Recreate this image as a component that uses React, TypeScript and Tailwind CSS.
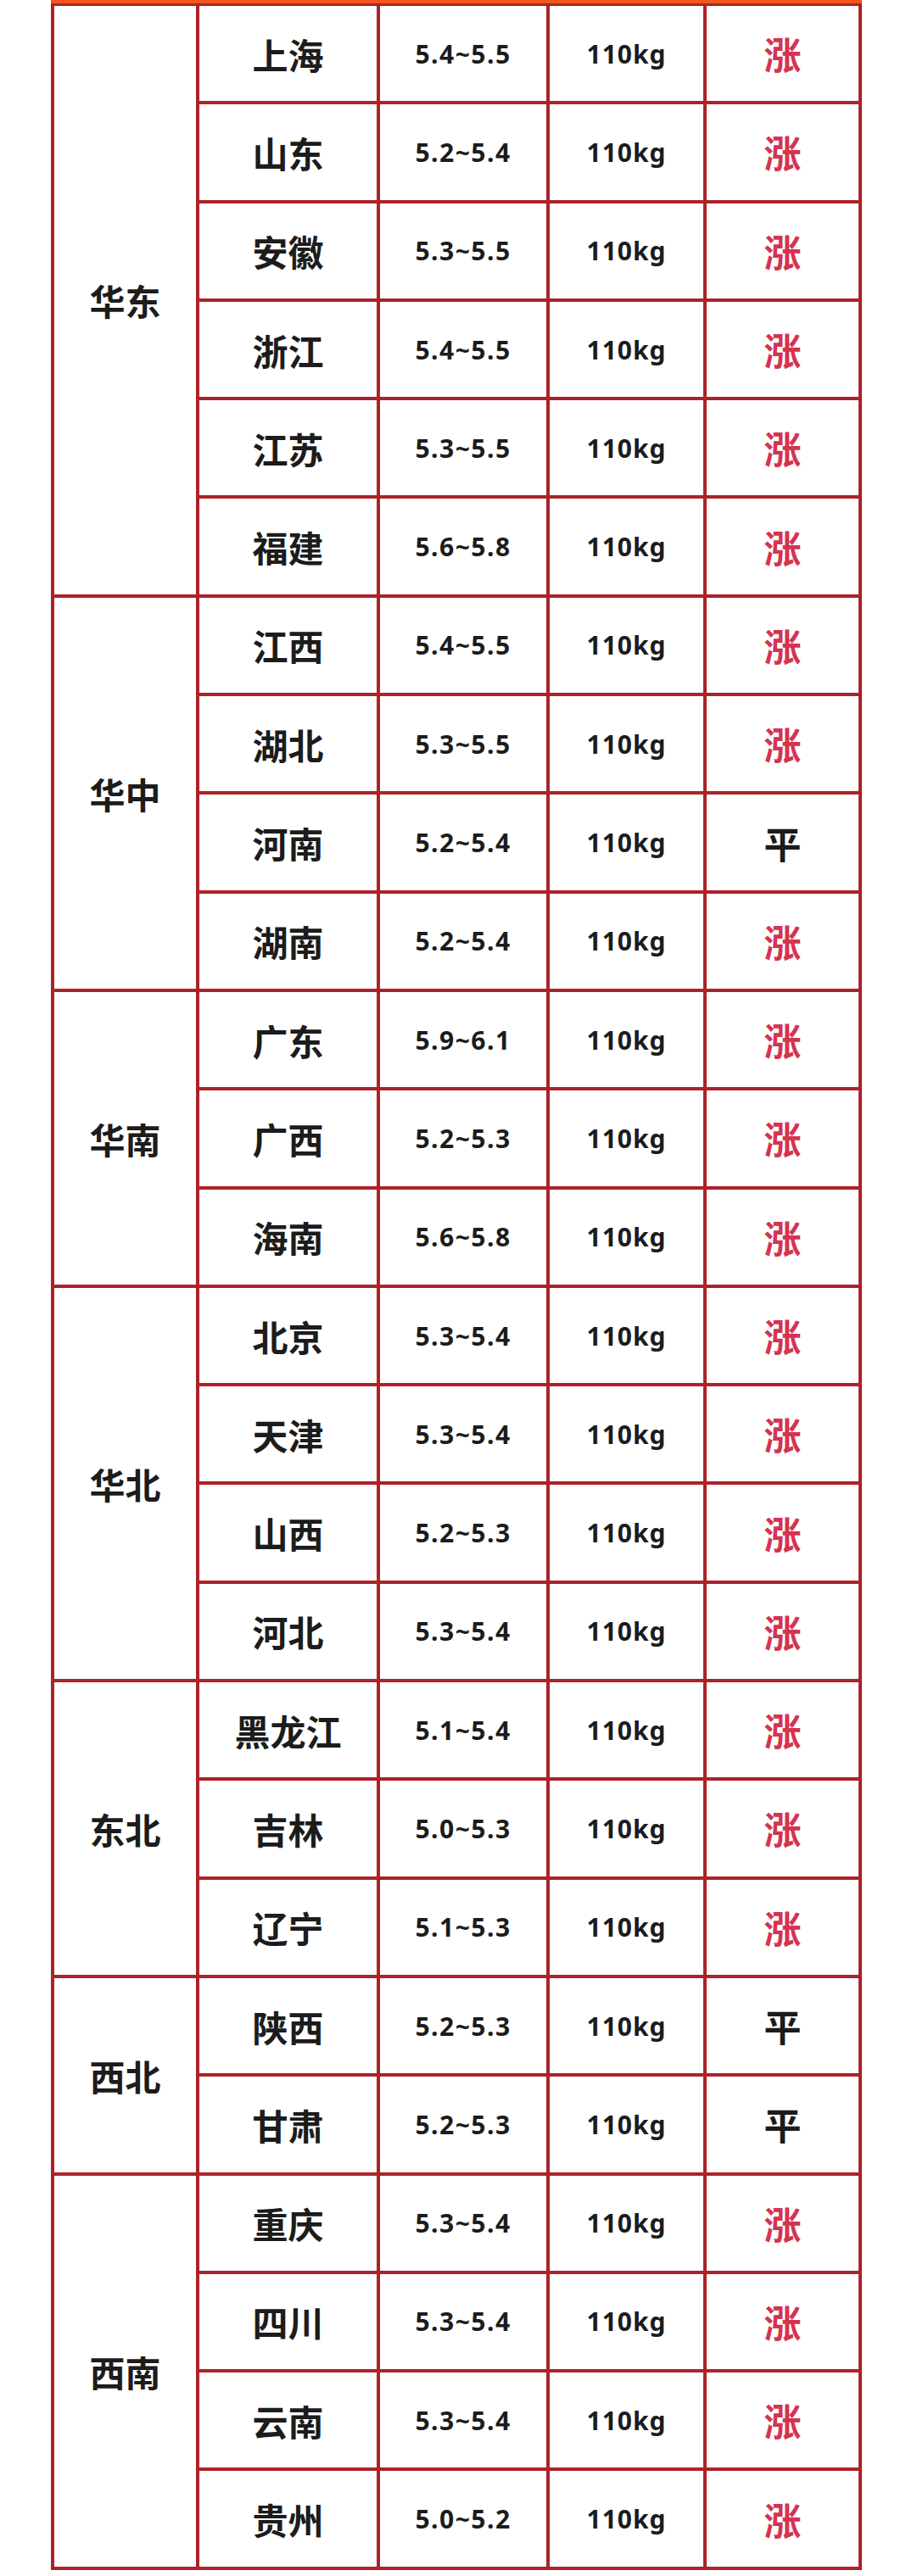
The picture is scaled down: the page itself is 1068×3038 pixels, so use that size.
const regions = [
  {
    name: "华东",
    rows: [
      { province: "上海", price: "5.4~5.5", weight: "110kg", trend: "涨" },
      { province: "山东", price: "5.2~5.4", weight: "110kg", trend: "涨" },
      { province: "安徽", price: "5.3~5.5", weight: "110kg", trend: "涨" },
      { province: "浙江", price: "5.4~5.5", weight: "110kg", trend: "涨" },
      { province: "江苏", price: "5.3~5.5", weight: "110kg", trend: "涨" },
      { province: "福建", price: "5.6~5.8", weight: "110kg", trend: "涨" },
    ],
  },
  {
    name: "华中",
    rows: [
      { province: "江西", price: "5.4~5.5", weight: "110kg", trend: "涨" },
      { province: "湖北", price: "5.3~5.5", weight: "110kg", trend: "涨" },
      { province: "河南", price: "5.2~5.4", weight: "110kg", trend: "平" },
      { province: "湖南", price: "5.2~5.4", weight: "110kg", trend: "涨" },
    ],
  },
  {
    name: "华南",
    rows: [
      { province: "广东", price: "5.9~6.1", weight: "110kg", trend: "涨" },
      { province: "广西", price: "5.2~5.3", weight: "110kg", trend: "涨" },
      { province: "海南", price: "5.6~5.8", weight: "110kg", trend: "涨" },
    ],
  },
  {
    name: "华北",
    rows: [
      { province: "北京", price: "5.3~5.4", weight: "110kg", trend: "涨" },
      { province: "天津", price: "5.3~5.4", weight: "110kg", trend: "涨" },
      { province: "山西", price: "5.2~5.3", weight: "110kg", trend: "涨" },
      { province: "河北", price: "5.3~5.4", weight: "110kg", trend: "涨" },
    ],
  },
  {
    name: "东北",
    rows: [
      { province: "黑龙江", price: "5.1~5.4", weight: "110kg", trend: "涨" },
      { province: "吉林", price: "5.0~5.3", weight: "110kg", trend: "涨" },
      { province: "辽宁", price: "5.1~5.3", weight: "110kg", trend: "涨" },
    ],
  },
  {
    name: "西北",
    rows: [
      { province: "陕西", price: "5.2~5.3", weight: "110kg", trend: "平" },
      { province: "甘肃", price: "5.2~5.3", weight: "110kg", trend: "平" },
    ],
  },
  {
    name: "西南",
    rows: [
      { province: "重庆", price: "5.3~5.4", weight: "110kg", trend: "涨" },
      { province: "四川", price: "5.3~5.4", weight: "110kg", trend: "涨" },
      { province: "云南", price: "5.3~5.4", weight: "110kg", trend: "涨" },
      { province: "贵州", price: "5.0~5.2", weight: "110kg", trend: "涨" },
    ],
  },
];

const cjk = "font-['Noto_Sans_CJK_SC',sans-serif]";
const num = "font-['Noto_Sans','Noto_Sans_CJK_SC',sans-serif]";

export default function App() {
  return (
    <div className="min-h-screen bg-white pl-[60px]">
      <div className="w-[956px]">
        {/* top edge of the table */}
        <div className="h-[4px] bg-[#f2571c]" />
        <div className="flex flex-col gap-[4px] bg-[#ad2229] px-[4px] pt-[3px] pb-[4px]">
          {regions.map((region) => (
            <div key={region.name} className="flex gap-[4px]">
              <div
                className={`w-[167px] shrink-0 bg-white flex items-center justify-center text-[42px] font-bold text-[#1c1c1c] ${cjk}`}
              >
                {region.name}
              </div>
              <div className="flex flex-1 flex-col gap-[4px]">
                {region.rows.map((row) => (
                  <div
                    key={row.province}
                    className="grid h-[112.3px] grid-cols-[209px_196px_181px_179px] gap-[4px]"
                  >
                    <div
                      className={`bg-white flex items-center justify-center text-[42px] font-bold text-[#1c1c1c] ${cjk}`}
                    >
                      {row.province}
                    </div>
                    <div
                      className={`bg-white flex items-center justify-center text-[30px] font-bold tracking-[1.5px] text-[#1c1c1c] ${num}`}
                    >
                      {row.price}
                    </div>
                    <div
                      className={`bg-white flex items-center justify-center text-[30px] font-bold tracking-[1px] text-[#1c1c1c] ${num}`}
                    >
                      {row.weight}
                    </div>
                    <div
                      className={`bg-white flex items-center justify-center text-[44px] font-bold ${cjk} ${
                        row.trend === "涨" ? "text-[#d4344f]" : "text-[#1c1c1c]"
                      }`}
                    >
                      {row.trend}
                    </div>
                  </div>
                ))}
              </div>
            </div>
          ))}
        </div>
      </div>
    </div>
  );
}
